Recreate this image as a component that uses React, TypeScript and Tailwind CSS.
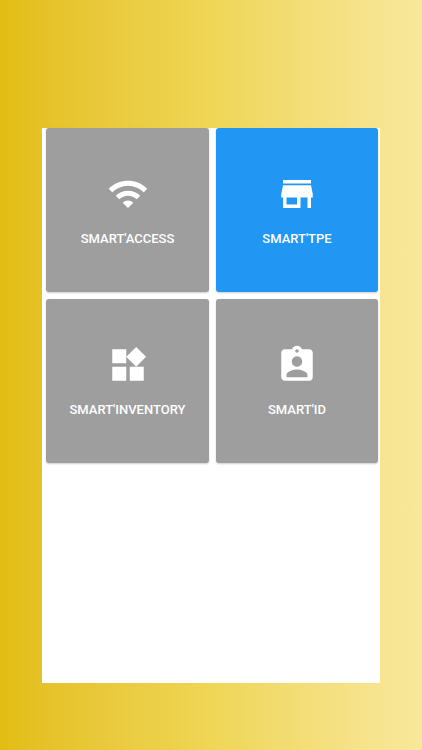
import React from 'react'

const ICONS = {
  wifi: 'M1 9l2 2c4.97-4.97 13.03-4.97 18 0l2-2C16.93 2.93 7.08 2.93 1 9zm8 8l3 3 3-3c-1.65-1.66-4.34-1.66-6 0zm-4-4l2 2c2.76-2.76 7.24-2.76 10 0l2-2C15.14 9.14 8.87 9.14 5 13z',
  store: 'M20 4H4v2h16V4zm1 10v-2l-1-5H4l-1 5v2h1v6h10v-6h4v6h2v-6h1zm-9 4H6v-4h6v4z',
  widgets: 'M13 13v8h8v-8h-8zM3 21h8v-8H3v8zM3 3v8h8V3H3zm13.66-1.31L11 7.34 16.66 13l5.66-5.66-5.66-5.65z',
  badge: 'M19 3h-4.18C14.4 1.84 13.3 1 12 1c-1.3 0-2.4.84-2.82 2H5c-1.1 0-2 .9-2 2v14c0 1.1.9 2 2 2h14c1.1 0 2-.9 2-2V5c0-1.1-.9-2-2-2zm-7 0c.55 0 1 .45 1 1s-.45 1-1 1-1-.45-1-1 .45-1 1-1zm0 4c1.66 0 3 1.34 3 3s-1.34 3-3 3-3-1.34-3-3 1.34-3 3-3zm6 12H6v-1.4c0-2 4-3.1 6-3.1s6 1.1 6 3.1V19z',
}

const ITEMS = [
  { label: "SMART'ACCESS", icon: ICONS.wifi, active: false },
  { label: "SMART'TPE", icon: ICONS.store, active: true },
  { label: "SMART'INVENTORY", icon: ICONS.widgets, active: false },
  { label: "SMART'ID", icon: ICONS.badge, active: false },
]

const App: React.FC = () => {
  return (
    <div className="h-[750px] w-[422px] overflow-hidden bg-gradient-to-r from-[#e3bd12] via-[#efd655] to-[#f9e89c] pt-[128px] pl-[42px] font-['Roboto',sans-serif]">
      <div className="h-[555px] w-[338px] bg-white px-1">
        <div className="grid grid-cols-[163px_162px] gap-x-[7px] gap-y-[7px]">
          {ITEMS.map((item) => (
            <div
              key={item.label}
              className={`flex h-[164px] flex-col items-center rounded-[3px] pt-[45px] text-white shadow-[0_1px_2px_rgba(0,0,0,0.2)] ${
                item.active ? 'bg-[#2196f3]' : 'bg-[#9e9e9e]'
              }`}
            >
              <svg viewBox="0 0 24 24" className="h-[42px] w-[42px]" fill="currentColor">
                <path d={item.icon} />
              </svg>
              <span className="mt-[14px] text-[13px] leading-[20px] font-medium">{item.label}</span>
            </div>
          ))}
        </div>
      </div>
    </div>
  )
}

export default App
